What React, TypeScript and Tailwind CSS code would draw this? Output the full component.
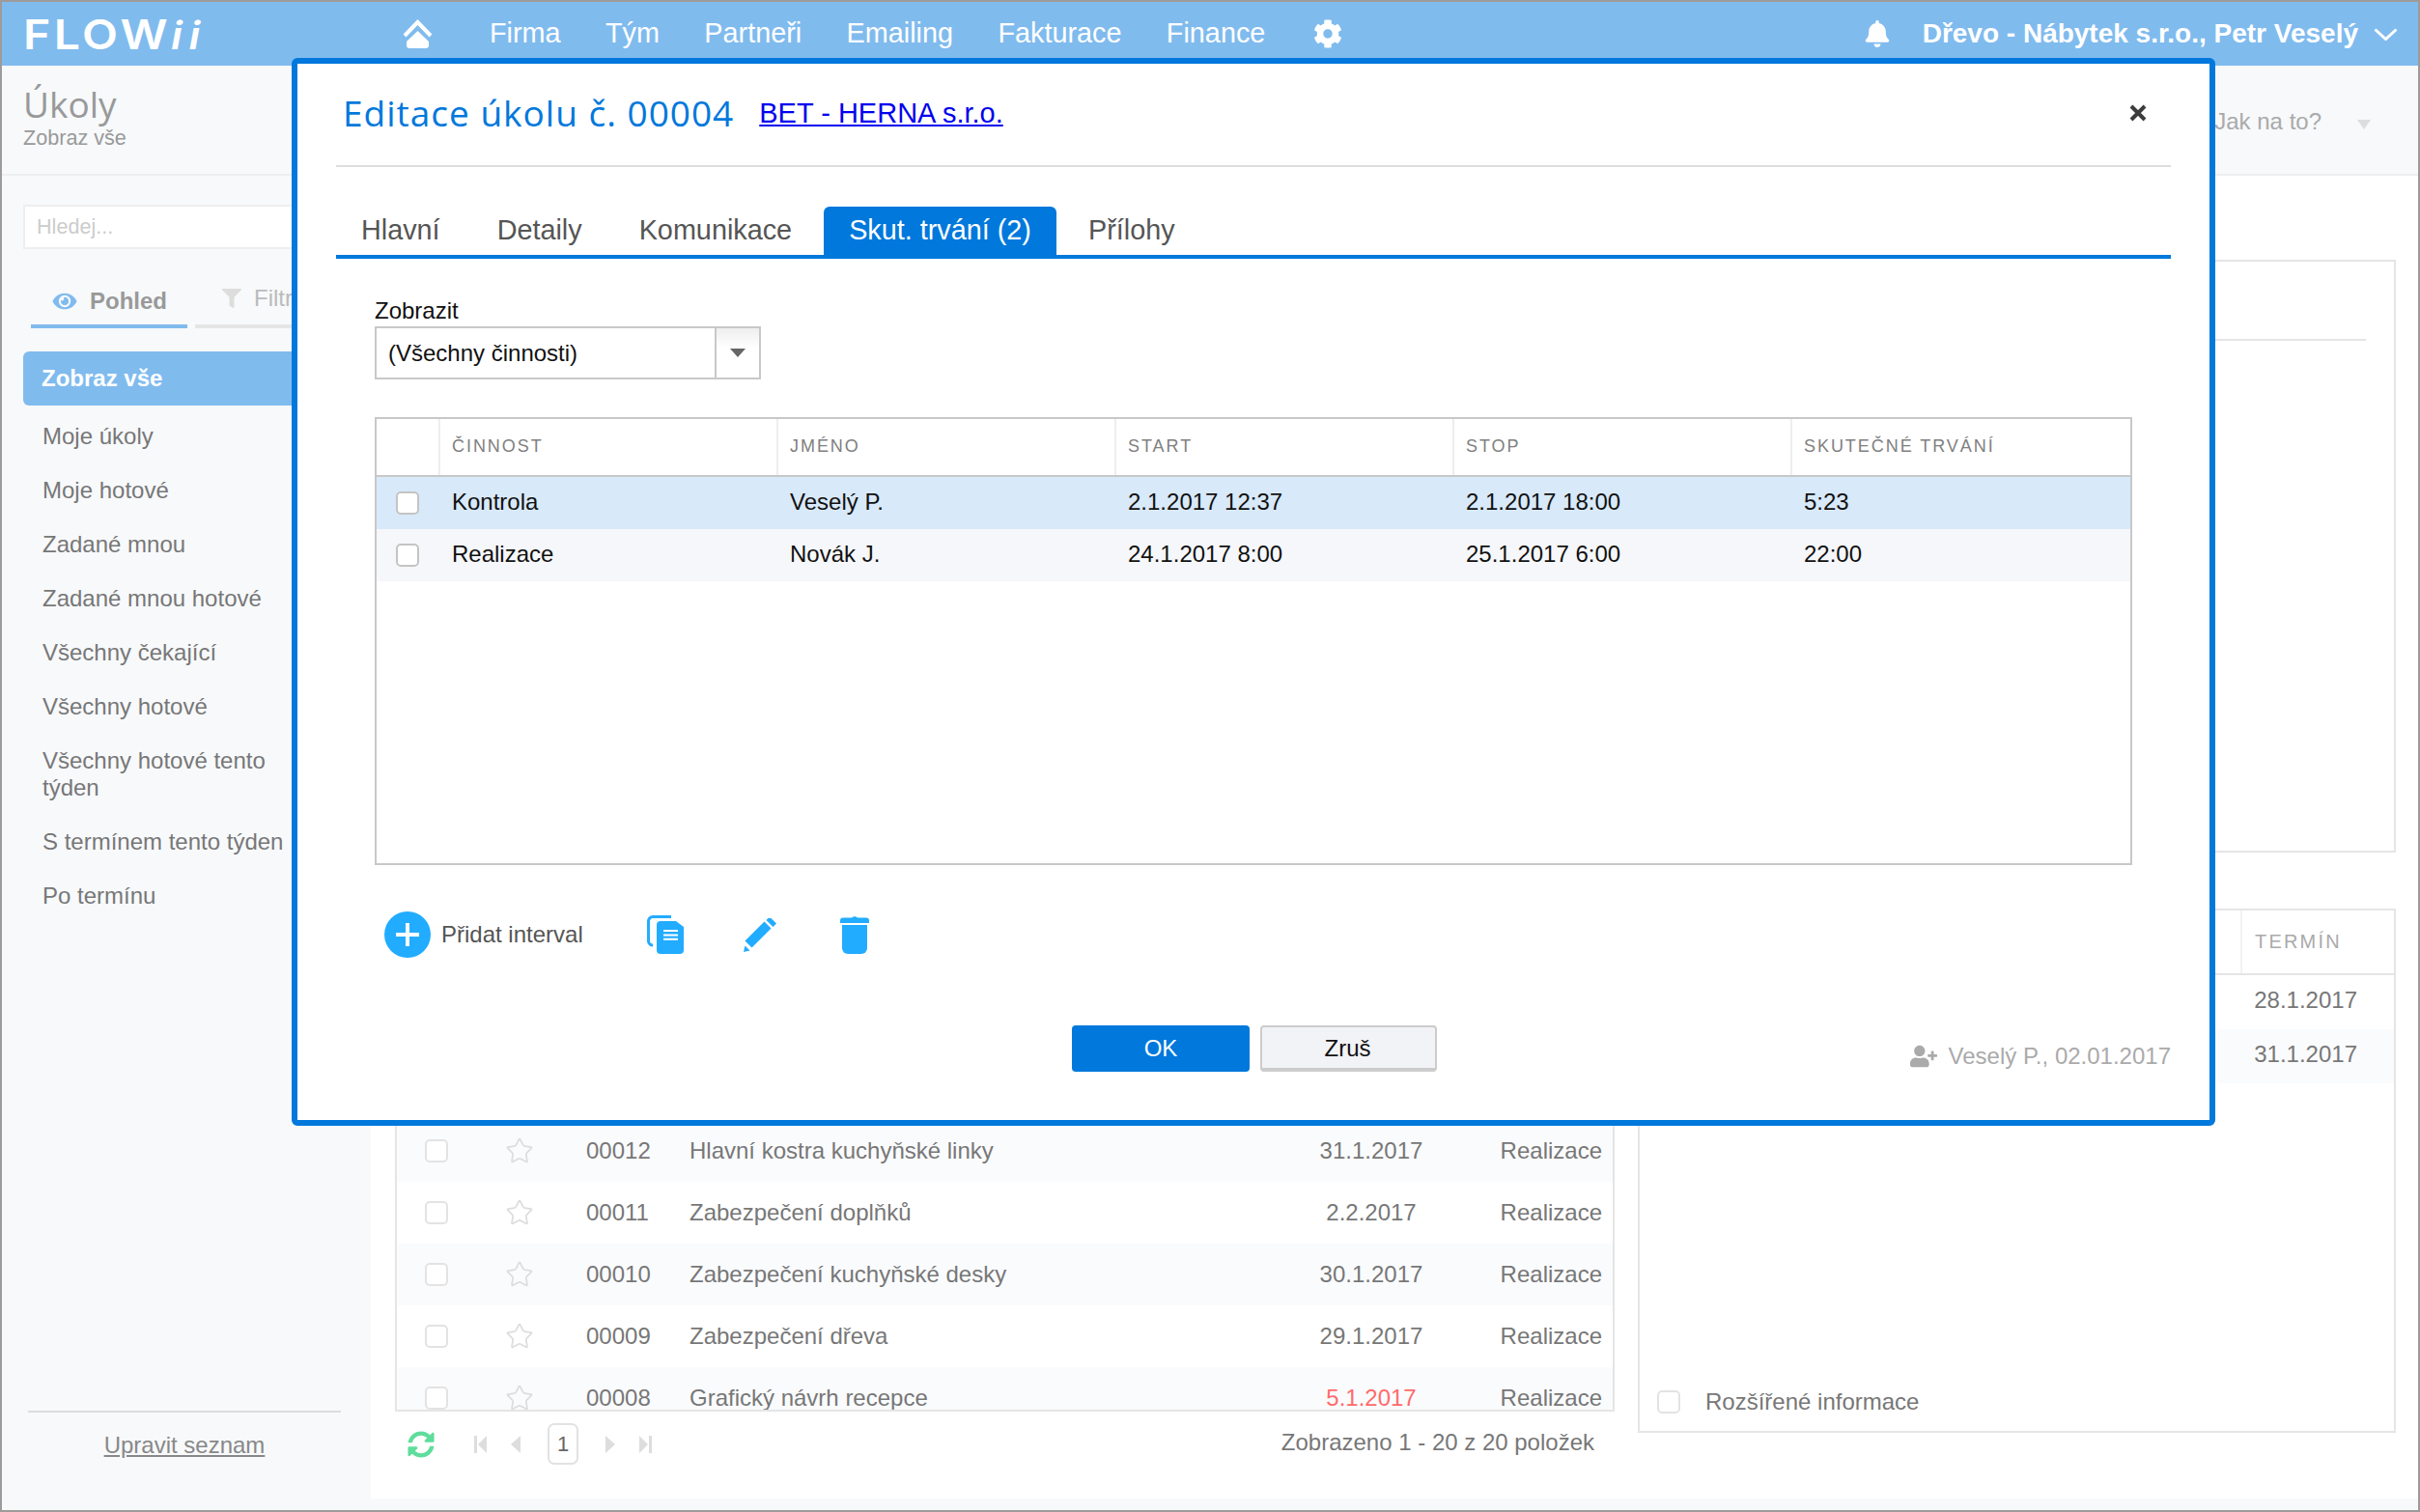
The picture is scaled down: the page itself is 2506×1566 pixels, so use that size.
import React from "react";
import { FaBell, FaCog, FaEye, FaFilter, FaSyncAlt, FaUserPlus } from "react-icons/fa";
import { Star } from "lucide-react";

const NAV = ["Firma", "Tým", "Partneři", "Emailing", "Fakturace", "Finance"];

const SIDE_ITEMS = [
  "Moje úkoly",
  "Moje hotové",
  "Zadané mnou",
  "Zadané mnou hotové",
  "Všechny čekající",
  "Všechny hotové",
  "Všechny hotové tento týden",
  "S termínem tento týden",
  "Po termínu",
];

const TASKS = [
  { id: "00012", name: "Hlavní kostra kuchyňské linky", date: "31.1.2017", late: false },
  { id: "00011", name: "Zabezpečení doplňků", date: "2.2.2017", late: false },
  { id: "00010", name: "Zabezpečení kuchyňské desky", date: "30.1.2017", late: false },
  { id: "00009", name: "Zabezpečení dřeva", date: "29.1.2017", late: false },
  { id: "00008", name: "Grafický návrh recepce", date: "5.1.2017", late: true },
];

const INTERVALS = [
  { act: "Kontrola", name: "Veselý P.", start: "2.1.2017 12:37", stop: "2.1.2017 18:00", len: "5:23" },
  { act: "Realizace", name: "Novák J.", start: "24.1.2017 8:00", stop: "25.1.2017 6:00", len: "22:00" },
];

const HEAD_COLS = ["ČINNOST", "JMÉNO", "START", "STOP", "SKUTEČNÉ TRVÁNÍ"];

const Checkbox = ({ light }: { light?: boolean }) => (
  <span
    className={
      light
        ? "block w-[24px] h-[24px] shrink-0 rounded-[5px] border-2 border-[#e3e3e3] bg-white"
        : "block w-[24px] h-[24px] shrink-0 rounded-[5px] border-2 border-[#c4c4c4] bg-white"
    }
  />
);

const HomeIcon = () => (
  <svg width="31" height="30" viewBox="0 0 31 30" fill="#fff">
    <path d="M2 17 15.5 3 29 17" fill="none" stroke="#fff" strokeWidth="4" />
    <path d="M15.5 12 27 23v4a3 3 0 0 1-3 3H7a3 3 0 0 1-3-3v-4Z" />
  </svg>
);

const CopyIcon = () => (
  <svg width="39" height="40" viewBox="0 0 39 40" fill="#22acff" className="shrink-0">
    <path d="M25 1.5H6A4.5 4.5 0 0 0 1.5 6v21A4.5 4.5 0 0 0 6 31" fill="none" stroke="#22acff" strokeWidth="3" />
    <path d="M14 6h16l8 6v24a4 4 0 0 1-4 4H14a4 4 0 0 1-4-4V10a4 4 0 0 1 4-4Z" />
    <path d="M17 16h15M17 20.4h15M17 24.8h15" stroke="#fff" strokeWidth="2" />
  </svg>
);

const PencilIcon = () => (
  <svg width="36" height="36" viewBox="0 0 36 36" fill="#22acff" className="ml-[61px] mt-[1px] shrink-0">
    <path d="M5 27 25 7" stroke="#22acff" strokeWidth="10" />
    <path d="M27 5.5 30.5 2" stroke="#22acff" strokeWidth="10" />
    <path d="M0 35 1.5 28.500 6.500 33.500Z" />
  </svg>
);

const TrashIcon = () => (
  <svg width="32" height="40" viewBox="0 0 32 40" fill="#22acff" className="ml-[63px] shrink-0">
    <path d="M13 2.500Q16 0 19 2.500H28A3 3 0 0 1 31 5.500V8H1V5.500A3 3 0 0 1 4 2.500Z" />
    <path d="M3 10H29V34A6 6 0 0 1 23 40H9A6 6 0 0 1 3 34Z" />
  </svg>
);

const Pager = () => (
  <div className="flex items-center h-[43px] mt-[12px] pl-[13px] pr-[21px]">
    <FaSyncAlt className="w-[28px] h-[28px] text-[#5fdd9d] shrink-0" />
    <svg width="13" height="18" viewBox="0 0 13 18" fill="#ddd" className="ml-[41px] shrink-0">
      <path d="M0 0h3v18H0zM13 0v18L4 9z" />
    </svg>
    <svg width="10" height="18" viewBox="0 0 10 18" fill="#ddd" className="ml-[25px] shrink-0">
      <path d="M10 0v18L0 9z" />
    </svg>
    <span className="ml-[28px] w-[32px] h-[43px] shrink-0 flex items-center justify-center rounded-[7px] border-2 border-[#e2e2e2] text-[22px] text-[#666]">
      1
    </span>
    <svg width="10" height="18" viewBox="0 0 10 18" fill="#ddd" className="ml-[28px] shrink-0">
      <path d="M0 0v18l10-9z" />
    </svg>
    <svg width="13" height="18" viewBox="0 0 13 18" fill="#ddd" className="ml-[25px] shrink-0">
      <path d="M10 0h3v18h-3zM0 0v18l9-9z" />
    </svg>
    <span className="ml-auto text-[24px] leading-[28px] text-[#777] -mt-[3px]">Zobrazeno 1 - 20 z 20 položek</span>
  </div>
);

const TaskEditDialog = () => (
  <div className="absolute left-[300px] top-[58px] w-[1992px] h-[1106px] flex flex-col px-[40px] bg-white border-[6px] border-[#0078dc] rounded-[6px]">
    <div className="flex items-center h-[105px] shrink-0 pl-[7px] pr-[25px] pb-[3px]">
      <h1 className="font-['Open_Sans',sans-serif] text-[37px] leading-[44px] tracking-[1px] text-[#0078dc]">
        Editace úkolu č. 00004
      </h1>
      <a className="ml-[26px] text-[29px] leading-[36px] text-[#0000ee] underline">BET - HERNA s.r.o.</a>
      <svg width="18" height="18" viewBox="0 0 18 18" className="ml-auto shrink-0">
        <path d="M2 2 16 16M16 2 2 16" stroke="#3c3c3c" strokeWidth="4" />
      </svg>
    </div>
    <div className="h-[2px] shrink-0 bg-[#dedede]" />

    <div className="flex items-end gap-[7px] h-[95px] shrink-0 border-b-4 border-[#0078dc] text-[28.800px] leading-[36px]">
      <span className="flex items-center h-[50px] pb-[2px] px-[26px] text-[#555]">Hlavní</span>
      <span className="flex items-center h-[50px] pb-[2px] px-[26px] text-[#555]">Detaily</span>
      <span className="flex items-center h-[50px] pb-[2px] px-[26px] text-[#555]">Komunikace</span>
      <span className="flex items-center h-[50px] pb-[2px] px-[26px] text-white bg-[#0078dc] rounded-t-[6px]">Skut. trvání (2)</span>
      <span className="flex items-center h-[50px] pb-[2px] px-[26px] text-[#555]">Přílohy</span>
    </div>

    <div className="flex flex-col px-[40px] text-[24px]">
      <label className="mt-[40px] h-[28px] leading-[28px] text-[#111]">Zobrazit</label>
      <div className="mt-[2px] flex w-[400px] h-[55px] border-2 border-[#c8c8c8]">
        <span className="flex-1 flex items-center pl-[12px] text-[#111]">(Všechny činnosti)</span>
        <span className="w-[46px] flex items-center justify-center border-l-2 border-[#c8c8c8] bg-linear-to-b from-[#eeeeee] to-white to-40%">
          <svg width="16" height="9" viewBox="0 0 16 9" fill="#666">
            <path d="M0 0h16L8 9z" />
          </svg>
        </span>
      </div>

      <div className="mt-[39px] h-[464px] border-2 border-[#c8c8c8]">
        <div className="flex h-[60px] border-b-2 border-[#c8c8c8] text-[18px] tracking-[1.95px] text-[#808080]">
          <span className="w-[66px] border-r-2 border-[#eeeeee]" />
          {HEAD_COLS.map((col, i) => (
            <span
              key={col}
              className={
                i < 4
                  ? "w-[350px] flex items-center pl-[12px] pb-[2px] border-r-2 border-[#eeeeee]"
                  : "flex-1 flex items-center pl-[12px] pb-[2px]"
              }
            >
              {col}
            </span>
          ))}
        </div>
        {INTERVALS.map((row, i) => (
          <div
            key={row.act}
            className={
              i === 0
                ? "flex h-[54px] pb-[2px] bg-[#d8e9f9] text-[#111]"
                : "flex h-[54px] pb-[2px] bg-[#f6f7fa] text-[#111]"
            }
          >
            <span className="w-[65px] flex items-center pl-[20px] pt-[2px]">
              <Checkbox />
            </span>
            <span className="w-[350px] flex items-center pl-[13px]">{row.act}</span>
            <span className="w-[350px] flex items-center pl-[13px]">{row.name}</span>
            <span className="w-[350px] flex items-center pl-[13px]">{row.start}</span>
            <span className="w-[350px] flex items-center pl-[13px]">{row.stop}</span>
            <span className="flex-1 flex items-center pl-[13px]">{row.len}</span>
          </div>
        ))}
      </div>

      <div className="mt-[48px] h-[48px] flex items-center pl-[10px]">
        <svg width="48" height="48" viewBox="0 0 48 48" className="shrink-0">
          <circle cx="24" cy="24" r="24" fill="#22acff" />
          <path d="M12 24h24M24 12v24" stroke="#fff" strokeWidth="4" />
        </svg>
        <span className="ml-[11px] w-[147px] text-[#555] whitespace-nowrap">Přidat interval</span>
        <span className="ml-[66px] flex items-center">
          <CopyIcon />
        </span>
        <PencilIcon />
        <TrashIcon />
      </div>
    </div>

    <div className="mt-[70px] flex items-center h-[48px] text-[24px]">
      <button className="ml-[762px] w-[184px] h-[48px] rounded-[4px] bg-[#0078dc] text-white">OK</button>
      <button className="ml-[11px] w-[183px] h-[48px] pt-[2px] pr-[2px] rounded-[4px] border-2 border-b-4 border-[#cccccc] bg-[#f2f3f7] text-[#111]">
        Zruš
      </button>
      <span className="ml-auto mt-[15px] flex items-center gap-[12px] text-[#aaaaaa]">
        <FaUserPlus className="w-[28px] h-[24px]" />
        Veselý P., 02.01.2017
      </span>
    </div>
  </div>
);

export default function App() {
  return (
    <div className="relative w-[2506px] h-[1566px] overflow-hidden flex flex-col border-2 border-[#9e9a9a] bg-[#f7f9fb] font-['Liberation_Sans',Arial,sans-serif]">
      <header className="flex items-center h-[66px] shrink-0 pl-[22px] pr-[21px] bg-[#80bbee] text-white text-[28.800px]">
        <div className="w-[190px] shrink-0 origin-left scale-x-[1.12] flex items-baseline font-['Inter',sans-serif] font-semibold text-[43px] leading-none tracking-[3px] whitespace-nowrap">
          FLOW<span className="italic text-[40px] tracking-[6px]">ii</span>
        </div>
        <span className="ml-[203px] shrink-0">
          <HomeIcon />
        </span>
        <nav className="ml-[59px] flex gap-[46.400px]">
          {NAV.map((item) => (
            <span key={item}>{item}</span>
          ))}
        </nav>
        <FaCog className="ml-[50px] w-[30px] h-[30px] shrink-0" />
        <FaBell className="ml-auto w-[26px] h-[28px] shrink-0" />
        <span className="ml-[34px] font-bold text-[28px] whitespace-nowrap">Dřevo - Nábytek s.r.o., Petr Veselý</span>
        <svg width="25" height="13" viewBox="0 0 25 13" className="ml-[16px] shrink-0">
          <path d="M1.500 1.500 12.500 11.500 23.500 1.500" fill="none" stroke="#fff" strokeWidth="3" />
        </svg>
      </header>

      <div className="flex items-start h-[114px] shrink-0 pl-[22px] border-b-2 border-[#eeeeee]">
        <div className="pt-[20px]">
          <div className="font-['Open_Sans',sans-serif] text-[37px] leading-[40px] text-[#999]">Úkoly</div>
          <div className="mt-[1px] text-[21.600px] leading-[28px] text-[#999]">Zobraz vše</div>
        </div>
        <div className="ml-auto flex items-center pt-[44px] pr-[49px]">
          <span className="text-[24px] leading-[28px] text-[#aaa]">Jak na to?</span>
          <svg width="14" height="10" viewBox="0 0 14 10" fill="#ddd" className="ml-[37px] mt-[6px]">
            <path d="M0 0h14L7 10z" />
          </svg>
        </div>
      </div>

      <div className="flex-1 flex min-h-0">
        <aside className="w-[382px] shrink-0 flex flex-col text-[24px] text-[#777]">
          <div className="ml-[22px] mt-[30px] w-[330px] h-[46px] flex items-center pl-[12px] border-2 border-[#eeeeee] bg-white text-[21.600px] text-[#cccccc]">
            Hledej...
          </div>
          <div className="ml-[30px] mt-[24px] flex gap-[8px]">
            <div className="w-[162px] h-[58px] flex items-center pt-[6px] pl-[22px] border-b-4 border-[#80bbee] font-bold text-[#999]">
              <FaEye className="w-[26px] h-[22px] text-[#80bbee]" />
              <span className="ml-[13px]">Pohled</span>
            </div>
            <div className="w-[140px] h-[58px] flex items-center pl-[28px] border-b-4 border-[#e5e5e5] text-[#bbb]">
              <FaFilter className="w-[20px] h-[20px] text-[#dddddd]" />
              <span className="ml-[13px]">Filtr</span>
            </div>
          </div>
          <div className="ml-[22px] mt-[24px] h-[56px] flex items-center pl-[19px] rounded-l-[6px] bg-[#80bbee] font-bold text-white">
            Zobraz vše
          </div>
          <ul className="mt-[4px] pl-[42px] pr-[60px]">
            {SIDE_ITEMS.map((item) => (
              <li key={item} className="py-[14px] leading-[28px] whitespace-pre-line">
                {item === "Všechny hotové tento týden" ? "Všechny hotové tento\ntýden" : item}
              </li>
            ))}
          </ul>
          <div className="mt-auto ml-[27px] mr-[31px] h-[103px] border-t-2 border-[#dddddd] pt-[20px] text-center leading-[28px] underline text-[#888]">
            Upravit seznam
          </div>
        </aside>

        <main className="flex-1 min-w-0 mb-[12px] pt-[87px] pl-[25px] pr-[23px] bg-white text-[24px] text-[#777]">
          <div className="h-[614px] border-2 border-[#e5e5e5] pt-[80px] pr-[29px]">
            <div className="h-[2px] bg-[#e5e5e5]" />
          </div>
          <div className="mt-[58px] flex gap-[24px]">
            <div className="w-[1263px] shrink-0 flex flex-col">
              <div className="h-[521px] overflow-hidden border-2 border-t-0 border-[#e5e5e5]">
                <div className="h-[219px]" />
                {TASKS.map((task, i) => (
                  <div key={task.id} className={i % 2 === 0 ? "flex items-center h-[64px] bg-[#fafbfd]" : "flex items-center h-[64px]"}>
                    <span className="w-[112px] pl-[29px]">
                      <Checkbox light />
                    </span>
                    <span className="w-[84px]">
                      <Star className="w-[30px] h-[30px] text-[#dddddd]" strokeWidth={1.4} />
                    </span>
                    <span className="w-[107px]">{task.id}</span>
                    <span className="flex-1">{task.name}</span>
                    <span className={task.late ? "w-[160px] text-center text-[#ff6b6b]" : "w-[160px] text-center"}>{task.date}</span>
                    <span className="w-[170px] pr-[11px] text-right">Realizace</span>
                  </div>
                ))}
              </div>
              <Pager />
            </div>

            <div className="flex-1 h-[543px] flex flex-col border-2 border-[#e5e5e5]">
              <div className="flex justify-end h-[67px] shrink-0 border-b-2 border-[#e5e5e5]">
                <span className="w-[159px] flex items-center pl-[13px] pb-[2px] border-l-2 border-[#f2f2f2] text-[20px] tracking-[2.200px] text-[#aaa]">
                  TERMÍN
                </span>
              </div>
              <div className="flex justify-end items-center h-[56px] pb-[5px] pr-[38px]">28.1.2017</div>
              <div className="flex justify-end items-center h-[56px] pb-[5px] pr-[38px] bg-[#fafbfd]">31.1.2017</div>
              <div className="mt-auto flex items-center gap-[26px] pl-[18px] pb-[12px]">
                <Checkbox light />
                <span>Rozšířené informace</span>
              </div>
            </div>
          </div>
        </main>
      </div>

      <TaskEditDialog />
    </div>
  );
}
